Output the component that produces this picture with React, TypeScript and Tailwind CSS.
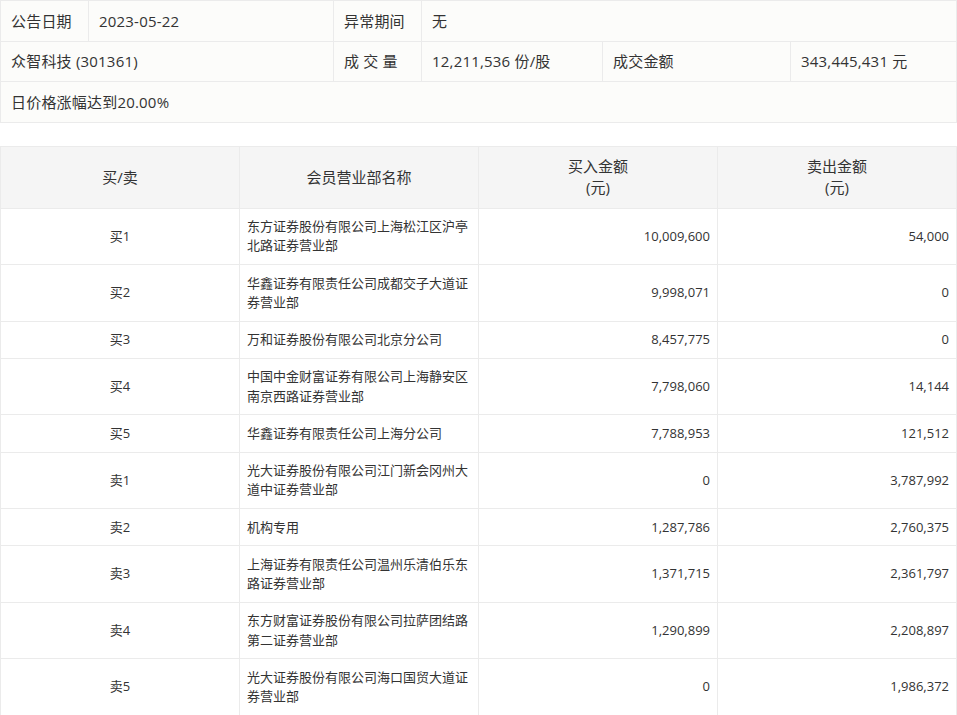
import React from 'react';

const rows = [
  { side: '买1', name: '东方证券股份有限公司上海松江区沪亭北路证券营业部', buy: '10,009,600', sell: '54,000' },
  { side: '买2', name: '华鑫证券有限责任公司成都交子大道证券营业部', buy: '9,998,071', sell: '0' },
  { side: '买3', name: '万和证券股份有限公司北京分公司', buy: '8,457,775', sell: '0' },
  { side: '买4', name: '中国中金财富证券有限公司上海静安区南京西路证券营业部', buy: '7,798,060', sell: '14,144' },
  { side: '买5', name: '华鑫证券有限责任公司上海分公司', buy: '7,788,953', sell: '121,512' },
  { side: '卖1', name: '光大证券股份有限公司江门新会冈州大道中证券营业部', buy: '0', sell: '3,787,992' },
  { side: '卖2', name: '机构专用', buy: '1,287,786', sell: '2,760,375' },
  { side: '卖3', name: '上海证券有限责任公司温州乐清伯乐东路证券营业部', buy: '1,371,715', sell: '2,361,797' },
  { side: '卖4', name: '东方财富证券股份有限公司拉萨团结路第二证券营业部', buy: '1,290,899', sell: '2,208,897' },
  { side: '卖5', name: '光大证券股份有限公司海口国贸大道证券营业部', buy: '0', sell: '1,986,372' },
];

const font = { fontFamily: '"Open Sans", "Noto Sans CJK SC", sans-serif' };

export default function App() {
  const infoCell = 'border border-[#ebebeb] px-[10px] py-[9.75px] leading-[20px] text-left font-normal';
  const headCell = 'border border-[#ebebeb] px-[7px] py-[9.5px] leading-[21px] font-normal text-center';
  const bodyCell = 'border border-[#ebebeb] px-[7px] py-[8.5px] leading-[19.25px]';

  return (
    <div className="w-[957px] bg-white text-[#333]" style={font}>
      <table className="w-[957px] border-collapse bg-[#fcfcfa] text-[15px] tracking-[0.2px] table-fixed">
        <colgroup>
          <col className="w-[88px]" />
          <col className="w-[245px]" />
          <col className="w-[88px]" />
          <col className="w-[181px]" />
          <col className="w-[188px]" />
          <col />
        </colgroup>
        <tbody>
          <tr>
            <td className={infoCell}>公告日期</td>
            <td className={infoCell}>2023-05-22</td>
            <td className={infoCell}>异常期间</td>
            <td className={infoCell} colSpan={3}>无</td>
          </tr>
          <tr>
            <td className={infoCell} colSpan={2}>众智科技 (301361)</td>
            <td className={infoCell}>成 交 量</td>
            <td className={infoCell}>12,211,536 份/股</td>
            <td className={infoCell}>成交金额</td>
            <td className={infoCell}>343,445,431 元</td>
          </tr>
          <tr>
            <td className={infoCell} colSpan={6}>日价格涨幅达到20.00%</td>
          </tr>
        </tbody>
      </table>

      <table className="mt-[23px] w-[957px] border-collapse table-fixed text-[13px]">
        <colgroup>
          <col className="w-[239px]" />
          <col className="w-[239px]" />
          <col className="w-[239px]" />
          <col />
        </colgroup>
        <thead>
          <tr className="bg-[#f5f5f5] text-[15px]">
            <th className={headCell}>买/卖</th>
            <th className={headCell}>会员营业部名称</th>
            <th className={headCell}>
              买入金额
              <br />
              (元)
            </th>
            <th className={headCell}>
              卖出金额
              <br />
              (元)
            </th>
          </tr>
        </thead>
        <tbody>
          {rows.map((r) => (
            <tr key={r.side}>
              <td className={`${bodyCell} text-center`}>{r.side}</td>
              <td className={`${bodyCell} text-left`}>{r.name}</td>
              <td className={`${bodyCell} text-right`}>{r.buy}</td>
              <td className={`${bodyCell} text-right`}>{r.sell}</td>
            </tr>
          ))}
        </tbody>
      </table>
    </div>
  );
}
